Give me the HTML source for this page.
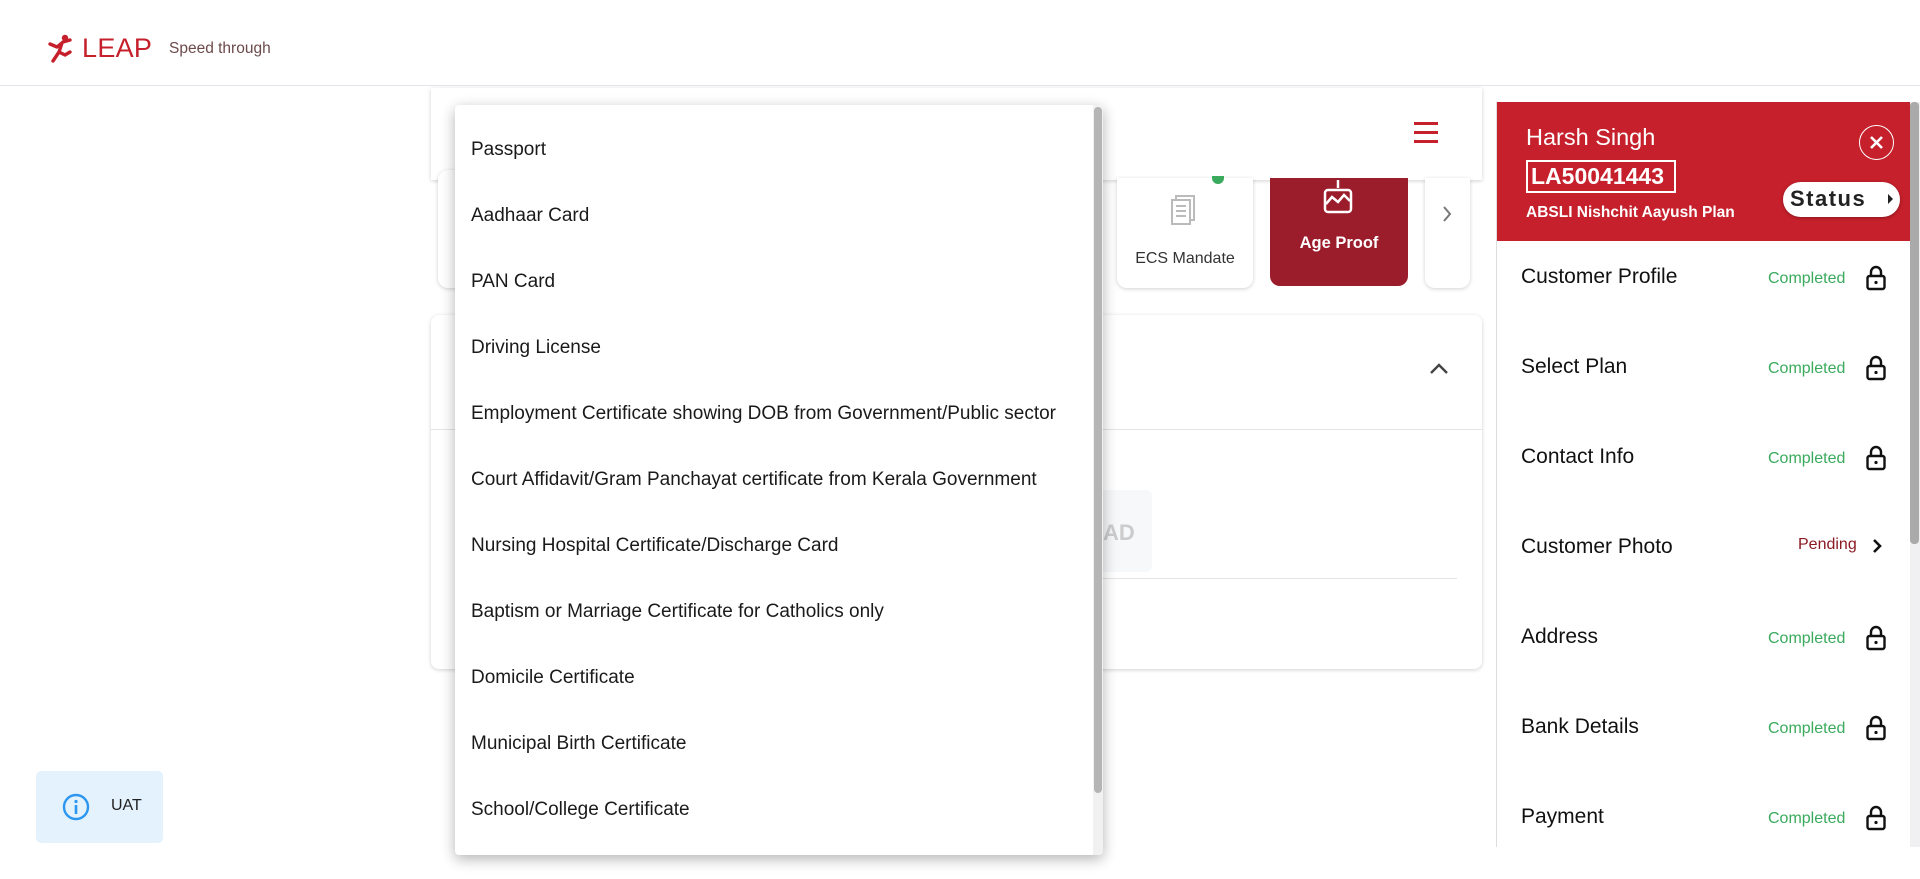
<!DOCTYPE html>
<html><head><meta charset="utf-8"><style>
*{margin:0;padding:0;box-sizing:border-box}
body{width:1920px;height:879px;overflow:hidden;background:#fff;font-family:"Liberation Sans",sans-serif;position:relative;color:#111}
.abs{position:absolute}
.hdr{left:0;top:0;width:1920px;height:86px;border-bottom:1px solid #e3e3ea}
.card{background:#fff;border-radius:8px;box-shadow:0 1px 4px rgba(0,0,0,.18)}
.dd{left:455px;top:105px;width:648px;height:750px;background:#fff;border-radius:4px;box-shadow:0 4px 14px rgba(0,0,0,.3);overflow:hidden}
.dd .it{position:absolute;left:16px;font-size:19px;color:#1a1a1a;white-space:nowrap}
.rp{left:1496px;top:102px;width:414px;height:745px;background:#fff;border-left:1px solid #ddd}
.row{position:absolute;left:24px;right:0;height:30px}
.row .l{position:absolute;left:0;top:0;font-size:21px;color:#111}
.row .s{position:absolute;left:247px;top:5px;font-size:16px;color:#3aaa5c}
.lock{position:absolute;left:344px;top:0}
</style></head><body>
<div class="abs hdr"></div>
<svg class="abs" style="left:48px;top:34px" width="26" height="30" viewBox="0 0 26 30"><circle cx="17" cy="4" r="3.2" fill="#c5202b"/><path d="M2 10 L9 13 L15 8 L22 6 M14 9 L11 18 L5 27 M11 18 L17 21 L22 18" stroke="#c5202b" stroke-width="3.4" fill="none" stroke-linecap="round" stroke-linejoin="round"/></svg>
<div class="abs" style="left:82px;top:33px;font-size:27px;color:#c5202b;letter-spacing:0.3px">LEAP</div>
<div class="abs" style="left:169px;top:40px;font-size:15.5px;color:#6b4a4a">Speed through</div>

<div class="abs card" style="left:431px;top:88px;width:1051px;height:92px;border-radius:0"></div>
<div class="abs" style="left:1414px;top:122px;width:24px;height:3px;background:#c5202b"></div>
<div class="abs" style="left:1414px;top:131px;width:24px;height:3px;background:#c5202b"></div>
<div class="abs" style="left:1414px;top:140px;width:24px;height:3px;background:#c5202b"></div>

<div class="abs card" style="left:438px;top:170px;width:30px;height:118px;border-radius:10px"></div>
<div class="abs card" style="left:1117px;top:178px;width:136px;height:110px;border-radius:0 0 10px 10px"></div>
<div class="abs" style="left:1212px;top:176px;width:12px;height:8px;border-radius:0 0 6px 6px;background:#3aaa5c"></div>
<svg class="abs" style="left:1170px;top:194px" width="28" height="34" viewBox="0 0 28 34"><rect x="6" y="2" width="18" height="24" fill="none" stroke="#bbb" stroke-width="2"/><rect x="2" y="6" width="18" height="24" fill="#fff" stroke="#bbb" stroke-width="2"/><path d="M6 12h10M6 17h10M6 22h10" stroke="#bbb" stroke-width="2"/></svg>
<div class="abs" style="left:1117px;top:250px;width:136px;text-align:center;font-size:16px;color:#333">ECS Mandate</div>
<div class="abs" style="left:1270px;top:178px;width:138px;height:108px;background:#9b1c2a;border-radius:0 0 10px 10px"></div>
<svg class="abs" style="left:1320px;top:180px" width="36" height="36" viewBox="0 0 36 36"><path d="M18 0v8" stroke="#fff" stroke-width="2.5"/><rect x="5" y="10" width="26" height="22" rx="3" fill="none" stroke="#fff" stroke-width="2.5"/><path d="M6 24l6-7 6 5 6-7 6 6" stroke="#fff" stroke-width="2.5" fill="none"/></svg>
<div class="abs" style="left:1270px;top:234px;width:138px;text-align:center;font-size:16.5px;color:#fff;font-weight:bold">Age Proof</div>
<div class="abs card" style="left:1425px;top:178px;width:45px;height:110px;border-radius:0 0 10px 10px"></div>
<svg class="abs" style="left:1441px;top:204px" width="12" height="20" viewBox="0 0 12 20"><path d="M3 3l6 7-6 7" stroke="#777" stroke-width="2" fill="none"/></svg>

<div class="abs card" style="left:431px;top:315px;width:1051px;height:354px"></div>
<div class="abs" style="left:431px;top:429px;width:1051px;height:1px;background:#e4e4e4"></div>
<svg class="abs" style="left:1428px;top:362px" width="22" height="14" viewBox="0 0 22 14"><path d="M3 11l8-8 8 8" stroke="#444" stroke-width="2.4" fill="none"/></svg>
<div class="abs" style="left:1000px;top:490px;width:152px;height:82px;background:#f7f8f9;border-radius:6px"></div>
<div class="abs" style="left:1103px;top:520px;font-size:22px;color:#ccc;font-weight:bold">AD</div>
<div class="abs" style="left:1000px;top:578px;width:457px;height:1px;background:#e4e4e4"></div>

<div class="abs dd">
<div class="it" style="top:34px">Passport</div>
<div class="it" style="top:100px">Aadhaar Card</div>
<div class="it" style="top:166px">PAN Card</div>
<div class="it" style="top:232px">Driving License</div>
<div class="it" style="top:298px">Employment Certificate showing DOB from Government/Public sector</div>
<div class="it" style="top:364px">Court Affidavit/Gram Panchayat certificate from Kerala Government</div>
<div class="it" style="top:430px">Nursing Hospital Certificate/Discharge Card</div>
<div class="it" style="top:496px">Baptism or Marriage Certificate for Catholics only</div>
<div class="it" style="top:562px">Domicile Certificate</div>
<div class="it" style="top:628px">Municipal Birth Certificate</div>
<div class="it" style="top:694px">School/College Certificate</div>
<div class="abs" style="left:638px;top:0;width:10px;height:750px;background:#f1f1f1"></div>
<div class="abs" style="left:639px;top:2px;width:8px;height:686px;background:#b5b5b5;border-radius:4px"></div>
</div>

<div class="abs rp">
<div class="abs" style="left:0;top:0;width:414px;height:139px;background:#c5202b"></div>
<div class="abs" style="left:29px;top:22px;font-size:23.5px;color:#fff">Harsh Singh</div>
<div class="abs" style="left:29px;top:58px;width:150px;height:33px;border:2.5px solid #fff;color:#fff;font-weight:bold;font-size:23px;padding-left:3px;line-height:28px">LA50041443</div>
<div class="abs" style="left:29px;top:102px;font-size:15.5px;color:#fff;font-weight:bold">ABSLI Nishchit Aayush Plan</div>
<div class="abs" style="left:362px;top:23px;width:35px;height:35px;border:1.5px solid #fff;border-radius:50%"></div>
<svg class="abs" style="left:370px;top:31px" width="19" height="19" viewBox="0 0 19 19"><path d="M4 4l11 11M15 4L4 15" stroke="#fff" stroke-width="2.6"/></svg>
<div class="abs" style="left:286px;top:80px;width:117px;height:35px;background:#fff;border-radius:18px;box-shadow:0 1px 3px rgba(0,0,0,.3)"></div>
<div class="abs" style="left:293px;top:84px;font-size:22px;font-weight:bold;color:#222;letter-spacing:1.5px">Status</div>
<svg class="abs" style="left:390px;top:91px" width="8" height="12" viewBox="0 0 8 12"><path d="M1 1l5 5-5 5z" fill="#222"/></svg>

<div class="row" style="top:163px"><div class="l">Customer Profile</div><div class="s">Completed</div><svg class="lock" width="22" height="26" viewBox="0 0 22 26"><path d="M6 11V7a5 5 0 0 1 10 0v4" stroke="#111" stroke-width="2.4" fill="none"/><rect x="2.5" y="11" width="17" height="13" rx="2" fill="none" stroke="#111" stroke-width="2.4"/><circle cx="11" cy="17.5" r="1.6" fill="#111"/></svg></div>
<div class="row" style="top:253px"><div class="l">Select Plan</div><div class="s">Completed</div><svg class="lock" width="22" height="26" viewBox="0 0 22 26"><path d="M6 11V7a5 5 0 0 1 10 0v4" stroke="#111" stroke-width="2.4" fill="none"/><rect x="2.5" y="11" width="17" height="13" rx="2" fill="none" stroke="#111" stroke-width="2.4"/><circle cx="11" cy="17.5" r="1.6" fill="#111"/></svg></div>
<div class="row" style="top:343px"><div class="l">Contact Info</div><div class="s">Completed</div><svg class="lock" width="22" height="26" viewBox="0 0 22 26"><path d="M6 11V7a5 5 0 0 1 10 0v4" stroke="#111" stroke-width="2.4" fill="none"/><rect x="2.5" y="11" width="17" height="13" rx="2" fill="none" stroke="#111" stroke-width="2.4"/><circle cx="11" cy="17.5" r="1.6" fill="#111"/></svg></div>
<div class="row" style="top:433px"><div class="l">Customer Photo</div><div class="s" style="left:277px;top:1px;color:#8b1a22">Pending</div><svg class="abs" style="left:350px;top:2px" width="12" height="18" viewBox="0 0 12 18"><path d="M3 3l6 6-6 6" stroke="#111" stroke-width="2.6" fill="none"/></svg></div>
<div class="row" style="top:523px"><div class="l">Address</div><div class="s">Completed</div><svg class="lock" width="22" height="26" viewBox="0 0 22 26"><path d="M6 11V7a5 5 0 0 1 10 0v4" stroke="#111" stroke-width="2.4" fill="none"/><rect x="2.5" y="11" width="17" height="13" rx="2" fill="none" stroke="#111" stroke-width="2.4"/><circle cx="11" cy="17.5" r="1.6" fill="#111"/></svg></div>
<div class="row" style="top:613px"><div class="l">Bank Details</div><div class="s">Completed</div><svg class="lock" width="22" height="26" viewBox="0 0 22 26"><path d="M6 11V7a5 5 0 0 1 10 0v4" stroke="#111" stroke-width="2.4" fill="none"/><rect x="2.5" y="11" width="17" height="13" rx="2" fill="none" stroke="#111" stroke-width="2.4"/><circle cx="11" cy="17.5" r="1.6" fill="#111"/></svg></div>
<div class="row" style="top:703px"><div class="l">Payment</div><div class="s">Completed</div><svg class="lock" width="22" height="26" viewBox="0 0 22 26"><path d="M6 11V7a5 5 0 0 1 10 0v4" stroke="#111" stroke-width="2.4" fill="none"/><rect x="2.5" y="11" width="17" height="13" rx="2" fill="none" stroke="#111" stroke-width="2.4"/><circle cx="11" cy="17.5" r="1.6" fill="#111"/></svg></div>
</div>
<div class="abs" style="left:1910px;top:102px;width:10px;height:745px;background:#f0f0f3"></div>
<div class="abs" style="left:1910px;top:102px;width:9px;height:442px;background:#aaa;border-radius:4px"></div>

<div class="abs" style="left:36px;top:771px;width:127px;height:72px;background:#e3f2fd;border-radius:5px"></div>
<svg class="abs" style="left:62px;top:793px" width="28" height="28" viewBox="0 0 28 28"><circle cx="14" cy="14" r="12" fill="none" stroke="#2d96ef" stroke-width="2.4"/><circle cx="14" cy="8.5" r="1.6" fill="#2d96ef"/><rect x="12.7" y="12" width="2.6" height="9" fill="#2d96ef"/></svg>
<div class="abs" style="left:111px;top:797px;font-size:16px;color:#222">UAT</div>
</body></html>
